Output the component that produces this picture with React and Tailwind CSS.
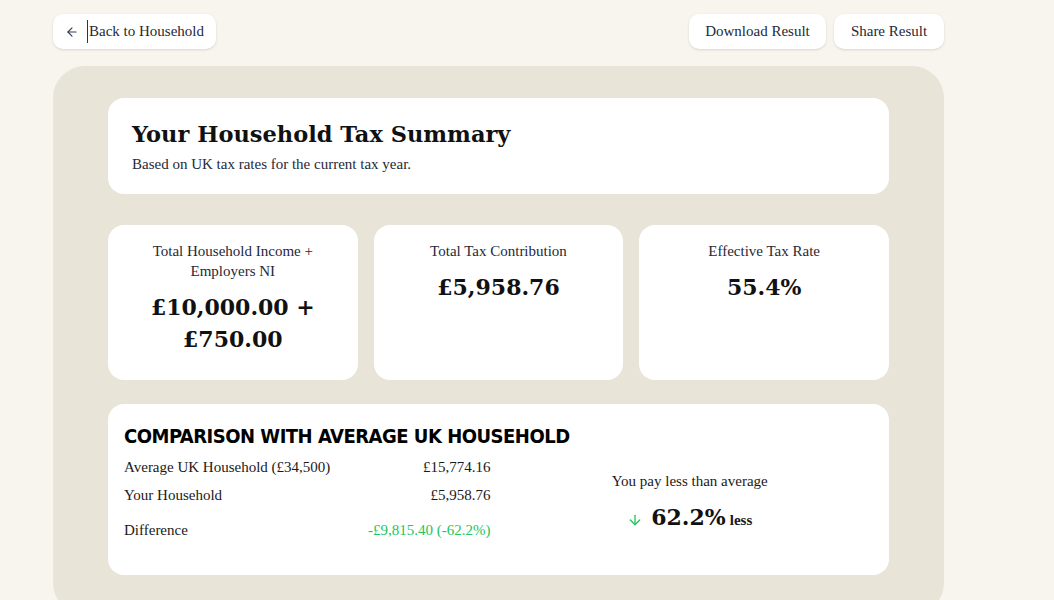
import React from 'react';
import { ArrowLeft, ArrowDown } from 'lucide-react';

const serif = { fontFamily: '"Liberation Serif", "DejaVu Serif", serif' };
const display = { fontFamily: '"DejaVu Serif", "Liberation Serif", serif' };

const StatCard = ({ label, value }) => (
    <div className="bg-white rounded-2xl px-6 pt-4 pb-6 flex flex-col items-center text-center h-[155px]">
        <p className="text-[15px] leading-5 text-[#1f2937]">{label}</p>
        <p className="mt-2.5 text-[22px] leading-8 font-bold text-[#111]" style={display}>{value}</p>
    </div>
);

const App = () => {
    const rows = [
        { label: 'Average UK Household (£34,500)', value: '£15,774.16' },
        { label: 'Your Household', value: '£5,958.76' },
    ];

    return (
        <div className="min-h-screen bg-[#f8f5ee] text-[#1a1a1a]" style={serif}>
            {/* Top bar */}
            <div className="ml-[53px] w-[891px] pt-[14px] flex items-center justify-between">
                <button className="h-[35px] w-[163px] bg-white rounded-[10px] flex items-center gap-2 pl-[12px] text-[15px] text-[#1f2937] shadow-sm">
                    <ArrowLeft size={14} strokeWidth={2} className="text-[#374151]" />
                    <span className="border-l border-[#333] pl-px">Back to Household</span>
                </button>
                <div className="flex gap-2">
                    <button className="h-[35px] w-[137px] bg-white rounded-[10px] text-[15px] text-[#1f2937] shadow-sm">Download Result</button>
                    <button className="h-[35px] w-[110px] bg-white rounded-[10px] text-[15px] text-[#1f2937] shadow-sm">Share Result</button>
                </div>
            </div>

            {/* Main panel */}
            <div className="ml-[53px] w-[891px] mt-[17px] bg-[#e8e4d8] rounded-[32px] px-[55px] pt-[32px] pb-10">
                {/* Header */}
                <div className="bg-white rounded-2xl px-6 h-[96px] flex flex-col justify-center">
                    <h1 className="text-[22.5px] leading-8 font-bold text-[#111]" style={display}>Your Household Tax Summary</h1>
                    <p className="text-[15px] leading-5 mt-1 text-[#1f2937]">Based on UK tax rates for the current tax year.</p>
                </div>

                {/* Stats */}
                <div className="grid grid-cols-3 gap-4 mt-[31px]">
                    <StatCard label={<>Total Household Income +<br />Employers NI</>} value={<>£10,000.00 +<br />£750.00</>} />
                    <StatCard label="Total Tax Contribution" value="£5,958.76" />
                    <StatCard label="Effective Tax Rate" value="55.4%" />
                </div>

                {/* Comparison */}
                <div className="bg-white rounded-2xl mt-6 px-4 pt-[19px] pb-[31px]">
                    <h2
                        className="text-[20px] leading-[26px] font-bold tracking-[-0.5px] text-black uppercase"
                        style={{ fontFamily: '"Liberation Sans Narrow", "DejaVu Sans Condensed", "Liberation Sans", sans-serif' }}
                    >
                        Comparison with Average UK Household
                    </h2>
                    <div className="grid grid-cols-2 gap-4 items-center mt-1">
                        <div className="text-[15px]">
                            {rows.map((r) => (
                                <div key={r.label} className="flex justify-between h-[28px] items-center">
                                    <span>{r.label}</span>
                                    <span>{r.value}</span>
                                </div>
                            ))}
                            <div className="flex justify-between h-[28px] items-center mt-[7px]">
                                <span>Difference</span>
                                <span className="text-[#22c55e]">-£9,815.40 (-62.2%)</span>
                            </div>
                        </div>
                        <div className="flex flex-col items-center pt-[6px]">
                            <p className="text-[15px] leading-5">You pay less than average</p>
                            <div className="flex items-baseline gap-2 mt-[10px]">
                                <ArrowDown size={16} strokeWidth={2} className="text-[#22c55e] self-center mt-1.5" />
                                <span className="text-[22px] leading-8 font-bold text-[#111]" style={display}>62.2%</span>
                                <span className="text-[15px] font-bold -ml-1">less</span>
                            </div>
                        </div>
                    </div>
                </div>
            </div>
        </div>
    );
};

export default App;
